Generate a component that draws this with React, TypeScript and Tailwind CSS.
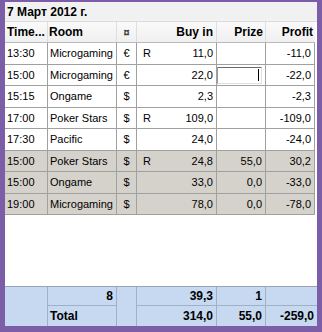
import React from "react";

type Row = { t: string; room: string; cur: string; r: string; buy: string; prize: string; profit: string; gray?: boolean; edit?: boolean };

const rows: Row[] = [
  { t: "13:30", room: "Microgaming", cur: "€", r: "R", buy: "11,0", prize: "", profit: "-11,0" },
  { t: "15:00", room: "Microgaming", cur: "€", r: "", buy: "22,0", prize: "", profit: "-22,0", edit: true },
  { t: "15:15", room: "Ongame", cur: "$", r: "", buy: "2,3", prize: "", profit: "-2,3" },
  { t: "17:00", room: "Poker Stars", cur: "$", r: "R", buy: "109,0", prize: "", profit: "-109,0" },
  { t: "17:30", room: "Pacific", cur: "$", r: "", buy: "24,0", prize: "", profit: "-24,0" },
  { t: "15:00", room: "Poker Stars", cur: "$", r: "R", buy: "24,8", prize: "55,0", profit: "30,2", gray: true },
  { t: "15:00", room: "Ongame", cur: "$", r: "", buy: "33,0", prize: "0,0", profit: "-33,0", gray: true },
  { t: "19:00", room: "Microgaming", cur: "$", r: "", buy: "78,0", prize: "0,0", profit: "-78,0", gray: true },
];

const cols = "grid grid-cols-[43px_69px_20px_80px_49px_49px]";
const cell = "border-r border-b border-[#a0a0a0] flex items-center";

export default function App() {
  return (
    <div
      className="w-[322px] h-[332px] bg-[#7b5ea7] pt-[2px] pl-[5px] pr-[5px] pb-[6px] text-[11px] text-black"
      style={{ fontFamily: '"Liberation Sans", Arial, sans-serif' }}
    >
      <div className="h-full bg-white flex flex-col">
        <div className="h-[20px] bg-[#f1f1f1] border-b border-[#dcdcdc] flex items-center pl-[2px] font-bold text-[12px]">
          7 Март 2012 г.
        </div>
        <div className={`${cols} w-[310px] h-[21px] bg-gradient-to-b from-[#fafafa] to-[#f0f0f0] border-b border-[#b8b8b8] font-bold text-[12px]`}>
          <div className="flex items-center pl-[2px] border-r border-[#dedede]">Time...</div>
          <div className="flex items-center pl-[1px] border-r border-[#dedede]">Room</div>
          <div className="flex items-center justify-center border-r border-[#dedede] text-[11px] text-[#444]">¤</div>
          <div className="flex items-center justify-end pr-[3px] border-r border-[#dedede]">Buy in</div>
          <div className="flex items-center justify-end pr-[2px] border-r border-[#dedede]">Prize</div>
          <div className="flex items-center justify-end pr-[2px]">Profit</div>
        </div>
        {rows.map((r, i) => (
          <div
            key={i}
            className={`${cols} w-[310px] ${i % 2 === 0 ? "h-[22px]" : "h-[21px]"} ${r.gray ? "bg-[#d5d2cc]" : "bg-white"}`}
          >
            <div className={`${cell} pl-[2px]`}>{r.t}</div>
            <div className={`${cell} pl-[2px]`}>{r.room}</div>
            <div className={`${cell} justify-center`}>{r.cur}</div>
            <div className={`${cell} justify-between pl-[6px] pr-[3px]`}>
              <span>{r.r}</span>
              <span>{r.buy}</span>
            </div>
            <div className={`${cell} justify-end pr-[3px]`}>
              {r.edit ? (
                <div className="w-[46px] h-[17px] border border-t-[#6b6b6b] border-l-[#9a9a9a] border-r-[#e0e0e0] border-b-[#e0e0e0] bg-white flex items-center justify-end pr-[2px]">
                  <div className="w-px h-[12px] bg-black" />
                </div>
              ) : (
                r.prize
              )}
            </div>
            <div className={`${cell} justify-end pr-[3px]`}>{r.profit}</div>
          </div>
        ))}
        <div className="flex-1" />
        <div className="grid grid-cols-[43px_69px_20px_80px_49px_51px] grid-rows-[19px_20px] bg-[#c6d9f0] border-t border-[#95a4b6] font-bold text-[12px]">
          <div className="row-span-2 border-r border-[#9fb1c6]" />
          <div className="flex items-center justify-end pr-[3px] border-r border-b border-[#9fb1c6]">8</div>
          <div className="row-span-2 border-r border-[#9fb1c6]" />
          <div className="flex items-center justify-end pr-[3px] border-r border-b border-[#9fb1c6]">39,3</div>
          <div className="flex items-center justify-end pr-[3px] border-r border-b border-[#9fb1c6]">1</div>
          <div className="border-b border-[#9fb1c6]" />
          <div className="flex items-center pl-[2px] border-r border-[#9fb1c6]">Total</div>
          <div className="flex items-center justify-end pr-[3px] border-r border-[#9fb1c6]">314,0</div>
          <div className="flex items-center justify-end pr-[3px] border-r border-[#9fb1c6]">55,0</div>
          <div className="flex items-center justify-end pr-[3px]">-259,0</div>
        </div>
      </div>
    </div>
  );
}
